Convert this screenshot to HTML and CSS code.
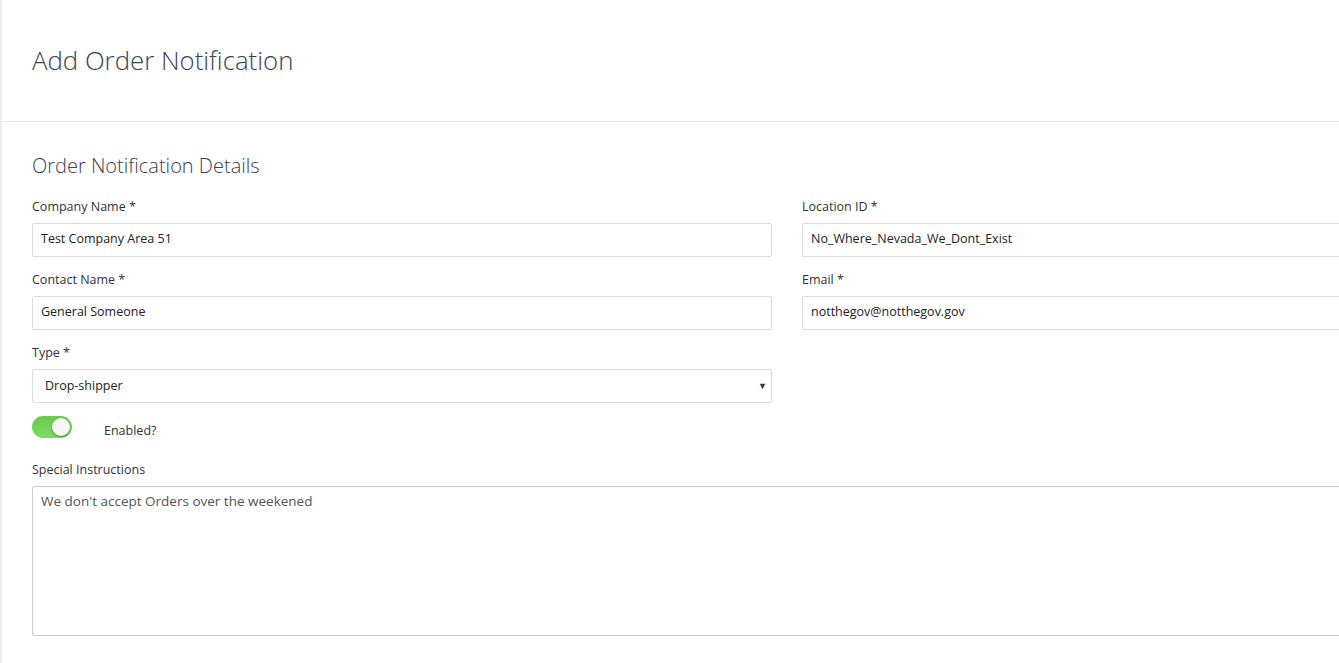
FILE: index.html
```html
<!DOCTYPE html>
<html lang="en">
<head>
    <meta charset="UTF-8">
    <meta name="viewport" content="width=device-width, initial-scale=1.0">
    <title>Add Order Notification</title>
    <link rel="stylesheet" href="styles.css">
</head>
<body>

<div class="page">
    <div class="page-header">
        <h1>Add Order Notification</h1>
    </div>

    <div class="page-body">
        <h2>Order Notification Details</h2>

        <div class="form-grid">
            <div class="field">
                <label>Company Name *</label>
                <input type="text" value="Test Company Area 51">
            </div>
            <div class="field">
                <label>Location ID *</label>
                <input type="text" value="No_Where_Nevada_We_Dont_Exist">
            </div>
            <div class="field">
                <label>Contact Name *</label>
                <input type="text" value="General Someone">
            </div>
            <div class="field">
                <label>Email *</label>
                <input type="text" value="notthegov@notthegov.gov">
            </div>
            <div class="field">
                <label>Type *</label>
                <div class="select">
                    <span>Drop-shipper</span>
                    <span class="caret">&#9660;</span>
                </div>
            </div>
        </div>

        <div class="toggle-row">
            <div class="toggle on"><div class="knob"></div></div>
            <span>Enabled?</span>
        </div>

        <div class="field wide">
            <label>Special Instructions</label>
            <textarea>We don't accept Orders over the weekened</textarea>
        </div>
    </div>
</div>

</body>
</html>
```

FILE: styles.css
```css
body {
    margin: 0;
    font-family: "Open Sans", "Noto Sans", sans-serif;
    color: #333;
    background: #fff;
    overflow: hidden;
}
.page {
    border-left: 2px solid #ececec;
    min-height: 663px;
    overflow: hidden;
}
.page-header {
    height: 119px;
    padding-bottom: 2px;
    border-bottom: 1px solid #e6e6e6;
    display: flex;
    align-items: center;
    padding-left: 30px;
    box-sizing: content-box;
}
.page-header h1 {
    margin: 0;
    font-size: 25.8px;
    font-weight: 300;
    color: #3b4350;
}
.page-body {
    padding: 29px 0 0 30px;
}
.page-body h2 {
    margin: 0 0 17px 0;
    font-size: 20px;
    font-weight: 300;
    color: #3b4350;
    line-height: 30px;
}
.form-grid {
    display: grid;
    grid-template-columns: 740px 740px;
    column-gap: 30px;
    row-gap: 14px;
}
.field label {
    display: block;
    font-size: 12.5px;
    line-height: 17px;
    margin-bottom: 8px;
    color: #333;
}
.field input,
.select {
    box-sizing: border-box;
    width: 100%;
    height: 34px;
    border: 1px solid #ddd;
    border-radius: 2px;
    padding: 0 8px 3px 8px;
    font-family: inherit;
    font-size: 12.5px;
    color: #222;
    outline: none;
}
.select {
    display: flex;
    align-items: center;
    justify-content: space-between;
    padding: 0 4px 2px 12px;
}
.select .caret {
    font-size: 9px;
    color: #333;
}
.toggle-row {
    display: flex;
    align-items: center;
    margin: 13px 0 0 0;
    height: 22px;
}
.toggle-row span {
    font-size: 12.5px;
    margin-left: 32px;
    margin-top: 6px;
}
.toggle {
    width: 40px;
    height: 22px;
    border-radius: 11px;
    background: #e0e0e0;
    position: relative;
}
.toggle.on {
    background: linear-gradient(#6cc84f, #7fdc62);
}
.toggle .knob {
    position: absolute;
    top: 2px;
    left: 2px;
    width: 18px;
    height: 18px;
    border-radius: 50%;
    background: #f7f7f7;
    box-shadow: 0 1px 2px rgba(0, 0, 0, 0.4);
}
.toggle.on .knob {
    left: 20px;
}
.field.wide {
    margin-top: 23px;
}
.field textarea {
    display: block;
    box-sizing: border-box;
    width: 1510px;
    height: 150px;
    border: 1px solid #ccc;
    border-radius: 2px;
    padding: 5px 8px;
    font-family: inherit;
    font-size: 13.5px;
    color: #555;
    resize: none;
    outline: none;
    box-shadow: inset 0 1px 1px rgba(0, 0, 0, 0.04);
}
```
